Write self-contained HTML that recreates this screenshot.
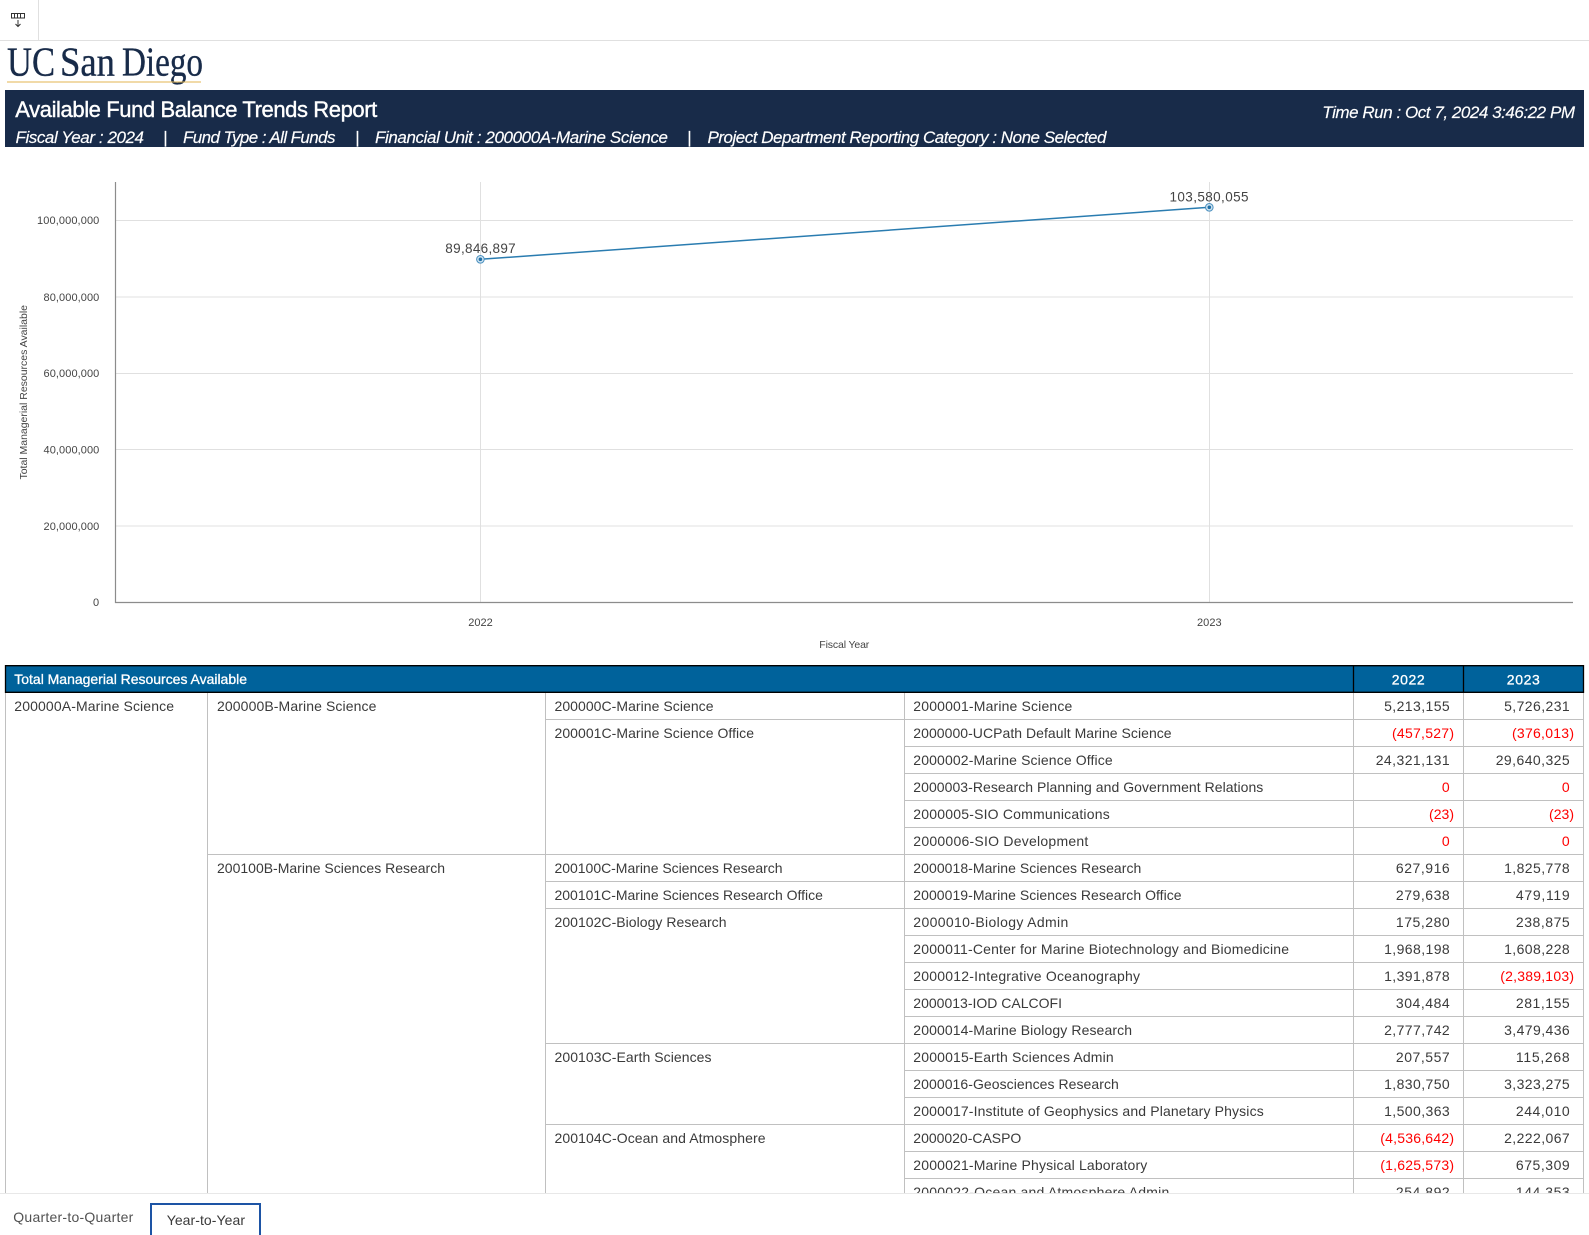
<!DOCTYPE html>
<html lang="en"><head><meta charset="utf-8"><title>Available Fund Balance Trends Report</title>
<style>
html,body{margin:0;padding:0;background:#fff;width:1589px;height:1235px;overflow:hidden}
svg{display:block;position:absolute;left:0;top:0}
text{font-family:"Liberation Sans",sans-serif;white-space:pre}
.t{font-size:14px;fill:#3a3a3a}
.r{font-size:14px;fill:#f00}
.h{font-size:14px;fill:#fff;stroke:#fff;stroke-width:.3px}
.s{font-size:17px;fill:#fff;font-style:italic;stroke:#fff;stroke-width:.15px}
.a{font-size:11px;fill:#444}
.d{font-size:13.5px;fill:#444}
.g{stroke:#c0c0c0;stroke-width:1;fill:none}
.l{stroke:#e0e0e0;stroke-width:1;fill:none}
.b{stroke:#000;stroke-width:1.3;fill:none}
.logo{font-family:"Liberation Serif",serif;font-size:41px;fill:#182b49;stroke:#182b49;stroke-width:.35px}
</style></head><body>
<svg width="1589" height="1235" viewBox="0 0 1589 1235" xmlns="http://www.w3.org/2000/svg">
<defs><clipPath id="c"><rect x="0" y="660" width="1589" height="533"/></clipPath></defs>
<!-- top bar -->
<path class="l" d="M0 40.5H1589M38.5 0V40" stroke="#e8e8e8"/>
<g fill="none" stroke="#333" stroke-width="1">
<rect x="11.5" y="13.5" width="13" height="4.5"/>
<path d="M14.5 13.5V18M17.5 13.5V18M20.5 13.5V18M18 20V26.5M15.5 24L18 26.5L20.5 24"/>
</g>
<!-- logo -->
<text class="logo" x="7" y="75.5" textLength="48" lengthAdjust="spacingAndGlyphs">UC</text>
<text class="logo" x="60" y="75.5" textLength="55" lengthAdjust="spacingAndGlyphs">San</text>
<text class="logo" x="122" y="75.5" textLength="81" lengthAdjust="spacingAndGlyphs">Diego</text>
<rect x="7" y="81.5" width="194" height="1" fill="#e3b552"/>
<!-- banner -->
<rect x="5" y="90" width="1579" height="57" fill="#182b49"/>
<text x="15.3" y="117" style="font-size:22px;fill:#fff;stroke:#fff;stroke-width:.4px" textLength="362">Available Fund Balance Trends Report</text>
<text class="s" x="15.5" y="143" textLength="128.5">Fiscal Year : 2024</text>
<text class="s" x="163" y="143">|</text>
<text class="s" x="183" y="143" textLength="152.5">Fund Type : All Funds</text>
<text class="s" x="355" y="143">|</text>
<text class="s" x="375" y="143" textLength="293">Financial Unit : 200000A-Marine Science</text>
<text class="s" x="687" y="143">|</text>
<text class="s" x="707.5" y="143" textLength="399">Project Department Reporting Category : None Selected</text>
<text class="s" x="1322.3" y="118" textLength="252.7">Time Run : Oct 7, 2024 3:46:22 PM</text>
<!-- chart -->
<path class="l" d="M115.5 220.5H1573M115.5 297H1573M115.5 373.5H1573M115.5 449.5H1573M115.5 526H1573M480.5 182V602M1209.5 182V602"/>
<path d="M115.5 182V602.5H1573" fill="none" stroke="#8c8c8c" stroke-width="1.2"/>
<text class="a" x="37" y="224" textLength="62.3">100,000,000</text>
<text class="a" x="43.5" y="301" textLength="55.8">80,000,000</text>
<text class="a" x="43.5" y="377" textLength="55.8">60,000,000</text>
<text class="a" x="43.5" y="453.5" textLength="55.8">40,000,000</text>
<text class="a" x="43.5" y="530" textLength="55.8">20,000,000</text>
<text class="a" x="93" y="606">0</text>
<text class="a" x="468.2" y="626" textLength="24.6">2022</text>
<text class="a" x="1197" y="626" textLength="24.6">2023</text>
<text class="a" x="819.3" y="648" textLength="50" style="font-size:10.5px">Fiscal Year</text>
<text class="a" transform="translate(27 479.5) rotate(-90)" x="0" y="0" textLength="174.5" style="font-size:10.5px">Total Managerial Resources Available</text>
<path d="M480.4 259.3L1209.3 207.3" stroke="#2a7cb0" stroke-width="1.5" fill="none"/>
<circle cx="480.4" cy="259.3" r="3.8" fill="#cfe3f0" stroke="#4a90bf" stroke-width="1"/><circle cx="480.4" cy="259.3" r="1.8" fill="#1f6fa6"/>
<circle cx="1209.3" cy="207.3" r="3.8" fill="#cfe3f0" stroke="#4a90bf" stroke-width="1"/><circle cx="1209.3" cy="207.3" r="1.8" fill="#1f6fa6"/>
<text class="d" x="445.3" y="253" textLength="70.4">89,846,897</text>
<text class="d" x="1169.5" y="201.5" textLength="79">103,580,055</text>
<!-- table -->
<g clip-path="url(#c)">
<path class="g" d="M5.5 692V1193M207.5 692V1193M545.5 692V1193M904.5 692V1193M1353.5 692V1193M1463.5 692V1193M1583.5 692V1193"/>
<path class="g" d="M904 719.5H1584M904 746.5H1584M904 773.5H1584M904 800.5H1584M904 827.5H1584M904 854.5H1584M904 881.5H1584M904 908.5H1584M904 935.5H1584M904 962.5H1584M904 989.5H1584M904 1016.5H1584M904 1043.5H1584M904 1070.5H1584M904 1097.5H1584M904 1124.5H1584M904 1151.5H1584M904 1178.5H1584"/>
<path class="g" d="M545 719.5H904M545 854.5H904M545 881.5H904M545 908.5H904M545 1043.5H904M545 1124.5H904M207 854.5H545"/>
<rect x="5.5" y="665.5" width="1578" height="27" fill="#00629b"/>
<path class="b" d="M5.5 665.7H1583.5V692.3H5.5ZM1353.5 665.7V692.3M1463.5 665.7V692.3"/>
<text class="h" x="14.3" y="684" textLength="232.7">Total Managerial Resources Available</text>
<text class="h" x="1391.7" y="684.3" textLength="33">2022</text>
<text class="h" x="1506.8" y="684.3" textLength="33">2023</text>

<text class="t" x="14.3" y="711" textLength="159.7">200000A-Marine Science</text>
<text class="t" x="217" y="711" textLength="159.4">200000B-Marine Science</text>
<text class="t" x="217" y="873" textLength="228">200100B-Marine Sciences Research</text>

<text class="t" x="554.5" y="711" textLength="159">200000C-Marine Science</text>
<text class="t" x="554.5" y="738" textLength="199.5">200001C-Marine Science Office</text>
<text class="t" x="554.5" y="873" textLength="228">200100C-Marine Sciences Research</text>
<text class="t" x="554.5" y="900" textLength="268.4">200101C-Marine Sciences Research Office</text>
<text class="t" x="554.5" y="927" textLength="172">200102C-Biology Research</text>
<text class="t" x="554.5" y="1062" textLength="157">200103C-Earth Sciences</text>
<text class="t" x="554.5" y="1143" textLength="211">200104C-Ocean and Atmosphere</text>

<text class="t" x="913.3" y="711" textLength="159">2000001-Marine Science</text>
<text class="t" x="913.3" y="738" textLength="258.3">2000000-UCPath Default Marine Science</text>
<text class="t" x="913.3" y="765" textLength="199.4">2000002-Marine Science Office</text>
<text class="t" x="913.3" y="792" textLength="350">2000003-Research Planning and Government Relations</text>
<text class="t" x="913.3" y="819" textLength="196.4">2000005-SIO Communications</text>
<text class="t" x="913.3" y="846" textLength="175">2000006-SIO Development</text>
<text class="t" x="913.3" y="873" textLength="228">2000018-Marine Sciences Research</text>
<text class="t" x="913.3" y="900" textLength="268.3">2000019-Marine Sciences Research Office</text>
<text class="t" x="913.3" y="927" textLength="155">2000010-Biology Admin</text>
<text class="t" x="913.3" y="954" textLength="375.7">2000011-Center for Marine Biotechnology and Biomedicine</text>
<text class="t" x="913.3" y="981" textLength="226.7">2000012-Integrative Oceanography</text>
<text class="t" x="913.3" y="1008" textLength="148.7">2000013-IOD CALCOFI</text>
<text class="t" x="913.3" y="1035" textLength="218.7">2000014-Marine Biology Research</text>
<text class="t" x="913.3" y="1062" textLength="200.4">2000015-Earth Sciences Admin</text>
<text class="t" x="913.3" y="1089" textLength="205.5">2000016-Geosciences Research</text>
<text class="t" x="913.3" y="1116" textLength="350.4">2000017-Institute of Geophysics and Planetary Physics</text>
<text class="t" x="913.3" y="1143" textLength="108">2000020-CASPO</text>
<text class="t" x="913.3" y="1170" textLength="234">2000021-Marine Physical Laboratory</text>
<text class="t" x="913.3" y="1197" textLength="256">2000022-Ocean and Atmosphere Admin</text>

<text class="t" x="1384.1" y="711" textLength="65.6">5,213,155</text><text class="t" x="1504.1" y="711" textLength="65.6">5,726,231</text>
<text class="r" x="1392" y="738" textLength="62">(457,527)</text><text class="r" x="1512" y="738" textLength="62">(376,013)</text>
<text class="t" x="1375.7" y="765" textLength="74">24,321,131</text><text class="t" x="1495.7" y="765" textLength="74">29,640,325</text>
<text class="r" x="1441.9" y="792">0</text><text class="r" x="1561.9" y="792">0</text>
<text class="r" x="1429" y="819" textLength="25">(23)</text><text class="r" x="1549" y="819" textLength="25">(23)</text>
<text class="r" x="1441.9" y="846">0</text><text class="r" x="1561.9" y="846">0</text>
<text class="t" x="1395.9" y="873" textLength="53.8">627,916</text><text class="t" x="1504.1" y="873" textLength="65.6">1,825,778</text>
<text class="t" x="1395.9" y="900" textLength="53.8">279,638</text><text class="t" x="1515.9" y="900" textLength="53.8">479,119</text>
<text class="t" x="1395.9" y="927" textLength="53.8">175,280</text><text class="t" x="1515.9" y="927" textLength="53.8">238,875</text>
<text class="t" x="1384.1" y="954" textLength="65.6">1,968,198</text><text class="t" x="1504.1" y="954" textLength="65.6">1,608,228</text>
<text class="t" x="1384.1" y="981" textLength="65.6">1,391,878</text><text class="r" x="1500.2" y="981" textLength="73.8">(2,389,103)</text>
<text class="t" x="1395.9" y="1008" textLength="53.8">304,484</text><text class="t" x="1515.9" y="1008" textLength="53.8">281,155</text>
<text class="t" x="1384.1" y="1035" textLength="65.6">2,777,742</text><text class="t" x="1504.1" y="1035" textLength="65.6">3,479,436</text>
<text class="t" x="1395.9" y="1062" textLength="53.8">207,557</text><text class="t" x="1515.9" y="1062" textLength="53.8">115,268</text>
<text class="t" x="1384.1" y="1089" textLength="65.6">1,830,750</text><text class="t" x="1504.1" y="1089" textLength="65.6">3,323,275</text>
<text class="t" x="1384.1" y="1116" textLength="65.6">1,500,363</text><text class="t" x="1515.9" y="1116" textLength="53.8">244,010</text>
<text class="r" x="1380.2" y="1143" textLength="73.8">(4,536,642)</text><text class="t" x="1504.1" y="1143" textLength="65.6">2,222,067</text>
<text class="r" x="1380.2" y="1170" textLength="73.8">(1,625,573)</text><text class="t" x="1515.9" y="1170" textLength="53.8">675,309</text>
<text class="t" x="1395.9" y="1197" textLength="53.8">254,892</text><text class="t" x="1515.9" y="1197" textLength="53.8">144,353</text>
</g>
<!-- footer tabs -->
<path d="M0 1193.5H1589" stroke="#e8e8e8" stroke-width="1" fill="none"/>
<text x="13.3" y="1222" style="font-size:14px;fill:#525252" textLength="120">Quarter-to-Quarter</text>
<path d="M151 1235V1204H260V1235" fill="none" stroke="#1d54a5" stroke-width="2"/>
<text x="166.7" y="1225" style="font-size:14px;fill:#3a3a3a" textLength="78.3">Year-to-Year</text>
</svg>
</body></html>
